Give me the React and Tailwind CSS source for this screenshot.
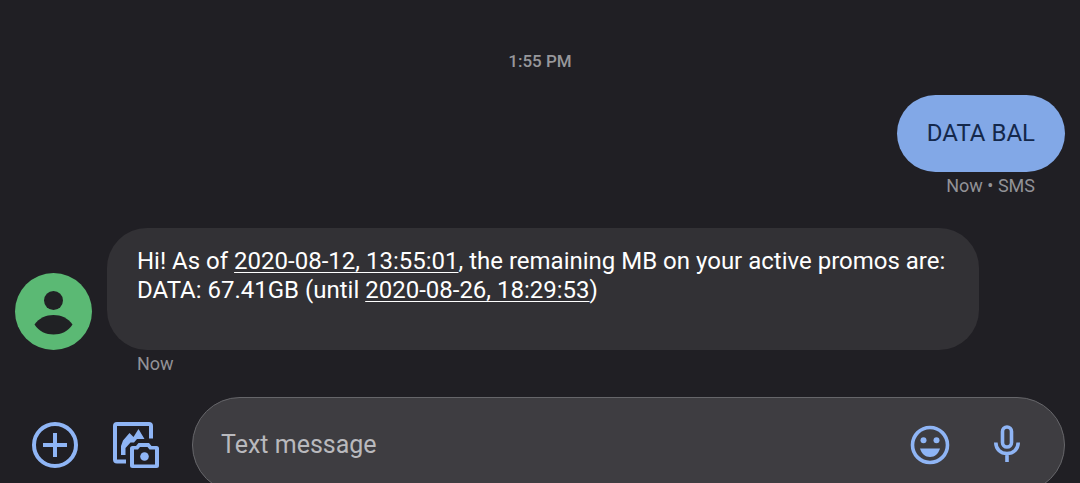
import React, { useState } from "react";

const messages = [
  { id: 1, sent: true, lines: [[{ text: "DATA BAL" }]], status: "Now • SMS" },
  {
    id: 2,
    sent: false,
    lines: [
      [
        { text: "Hi! As of " },
        { text: "2020-08-12, 13:55:01", link: true },
        { text: ", the remaining MB on your active promos are:" },
      ],
      [{ text: "DATA: 67.41GB (until " }, { text: "2020-08-26, 18:29:53", link: true }, { text: ")" }],
    ],
    status: "Now",
  },
];

function PlusIcon() {
  return (
    <svg className="size-12" viewBox="0 0 48 48" fill="none" stroke="currentColor" strokeWidth="4" aria-hidden="true">
      <circle cx="24" cy="24" r="21" />
      <path d="M24 12v24M12 24h24" />
    </svg>
  );
}

function GalleryIcon() {
  return (
    <svg className="size-12" viewBox="0 0 48 48" fill="none" aria-hidden="true">
      <path d="M14 40.500H5A2 2 0 0 1 3 38.500V5A2 2 0 0 1 5 3H37A2 2 0 0 1 39 5V17.500" stroke="currentColor" strokeWidth="4" />
      <path d="M9 34V25L11 19.500L17.500 12L21.500 16L26.500 8L32.500 18H25L22 21.500H18.500L13.500 27V34Z" fill="currentColor" />
      <path
        fillRule="evenodd"
        d="M26.500 22H37L39.500 25H44.500A2.500 2.500 0 0 1 47 27.500V44.500A2.500 2.500 0 0 1 44.500 47H20.500A2.500 2.500 0 0 1 18 44.500V27.500A2.500 2.500 0 0 1 20.500 25H24ZM28 26L26 28.500H22V43.500H43V28.500H37.500L35.500 26Z"
        fill="currentColor"
      />
      <circle cx="32.500" cy="35.500" r="4.300" fill="currentColor" />
    </svg>
  );
}

function EmojiIcon() {
  return (
    <svg className="size-10" viewBox="0 0 40 40" fill="currentColor" aria-hidden="true">
      <circle cx="20" cy="20" r="17.500" fill="none" stroke="currentColor" strokeWidth="3.600" />
      <circle cx="13.500" cy="15.300" r="3" />
      <circle cx="26.500" cy="15.300" r="3" />
      <path d="M10 23.500H30C28.500 28.500 24.800 32 20 32S11.500 28.500 10 23.500Z" />
    </svg>
  );
}

function MicIcon() {
  return (
    <svg className="size-10" viewBox="0 0 40 40" fill="none" stroke="currentColor" strokeWidth="3.600" aria-hidden="true">
      <rect x="15.500" y="2" width="9" height="20" rx="4.500" />
      <path d="M8.800 17.500C8.800 24 13.500 28.500 20 28.500S31.200 24 31.200 17.500M20 28.500V37" />
    </svg>
  );
}

function Avatar() {
  return (
    <div className="size-[77px] shrink-0 rounded-full bg-[#5bb974] text-[#202124]">
      <svg className="size-full" viewBox="0 0 77 77" fill="currentColor" role="img" aria-label="Contact">
        <circle cx="38.500" cy="27.500" r="9.500" />
        <path d="M19.500 51.500C24 45 31 42 38.500 42S53 45 57.500 51.500C53 58.500 46 61.500 38.500 61.500S24 58.500 19.500 51.500Z" />
      </svg>
    </div>
  );
}

function MessageText({ lines }) {
  return lines.map((line, i) => (
    <p key={i}>
      {line.map((part, j) =>
        part.link ? (
          <a key={j} href="#" className="underline decoration-1 underline-offset-3">
            {part.text}
          </a>
        ) : (
          part.text
        )
      )}
    </p>
  ));
}

function SentMessage({ message }) {
  return (
    <div className="flex flex-col items-end">
      <div className="rounded-full bg-[#82a8e7] px-[30px] py-6 text-2xl leading-[29px] text-[#14284b]">
        <MessageText lines={message.lines} />
      </div>
      <p className="mr-[30px] mt-1 text-[18px] leading-5 text-[#929297]">{message.status}</p>
    </div>
  );
}

function ReceivedMessage({ message }) {
  return (
    <div className="mt-8">
      <div className="flex items-end gap-[15px]">
        <Avatar />
        <div className="mr-[86px] grow rounded-[40px] bg-[#323135] px-[30px] pt-[19px] pb-[45px] text-2xl leading-[29px] text-white">
          <MessageText lines={message.lines} />
        </div>
      </div>
      <p className="ml-[122px] mt-1 text-[18px] leading-5 text-[#929297]">{message.status}</p>
    </div>
  );
}

export default function App() {
  const [draft, setDraft] = useState("");

  return (
    <main className="h-screen overflow-hidden bg-[#201f24] px-[15px] font-['Roboto',sans-serif]">
      <p className="pt-[51px] text-center text-[17px] leading-5 font-medium text-[#97979b]">1:55 PM</p>

      <section className="mt-6">
        {messages.map((message) =>
          message.sent ? (
            <SentMessage key={message.id} message={message} />
          ) : (
            <ReceivedMessage key={message.id} message={message} />
          )
        )}
      </section>

      <form className="mt-[23px] flex items-center text-[#8fb5f5]" onSubmit={(e) => e.preventDefault()}>
        <button type="button" aria-label="Attach" className="ml-4">
          <PlusIcon />
        </button>
        <button type="button" aria-label="Gallery" className="ml-[33px]">
          <GalleryIcon />
        </button>
        <div className="ml-8 flex h-24 grow items-center rounded-full border border-[#66666a] bg-[#3e3d41] pr-[37px] pl-7">
          <input
            type="text"
            aria-label="Text message"
            placeholder="Text message"
            value={draft}
            onChange={(e) => setDraft(e.target.value)}
            className="min-w-0 grow bg-transparent text-[25px] leading-8 text-white outline-none placeholder:text-[#b9b9bd]"
          />
          <button type="button" aria-label="Emoji">
            <EmojiIcon />
          </button>
          <button type="button" aria-label="Voice message" className="ml-[37px]">
            <MicIcon />
          </button>
        </div>
      </form>
    </main>
  );
}
